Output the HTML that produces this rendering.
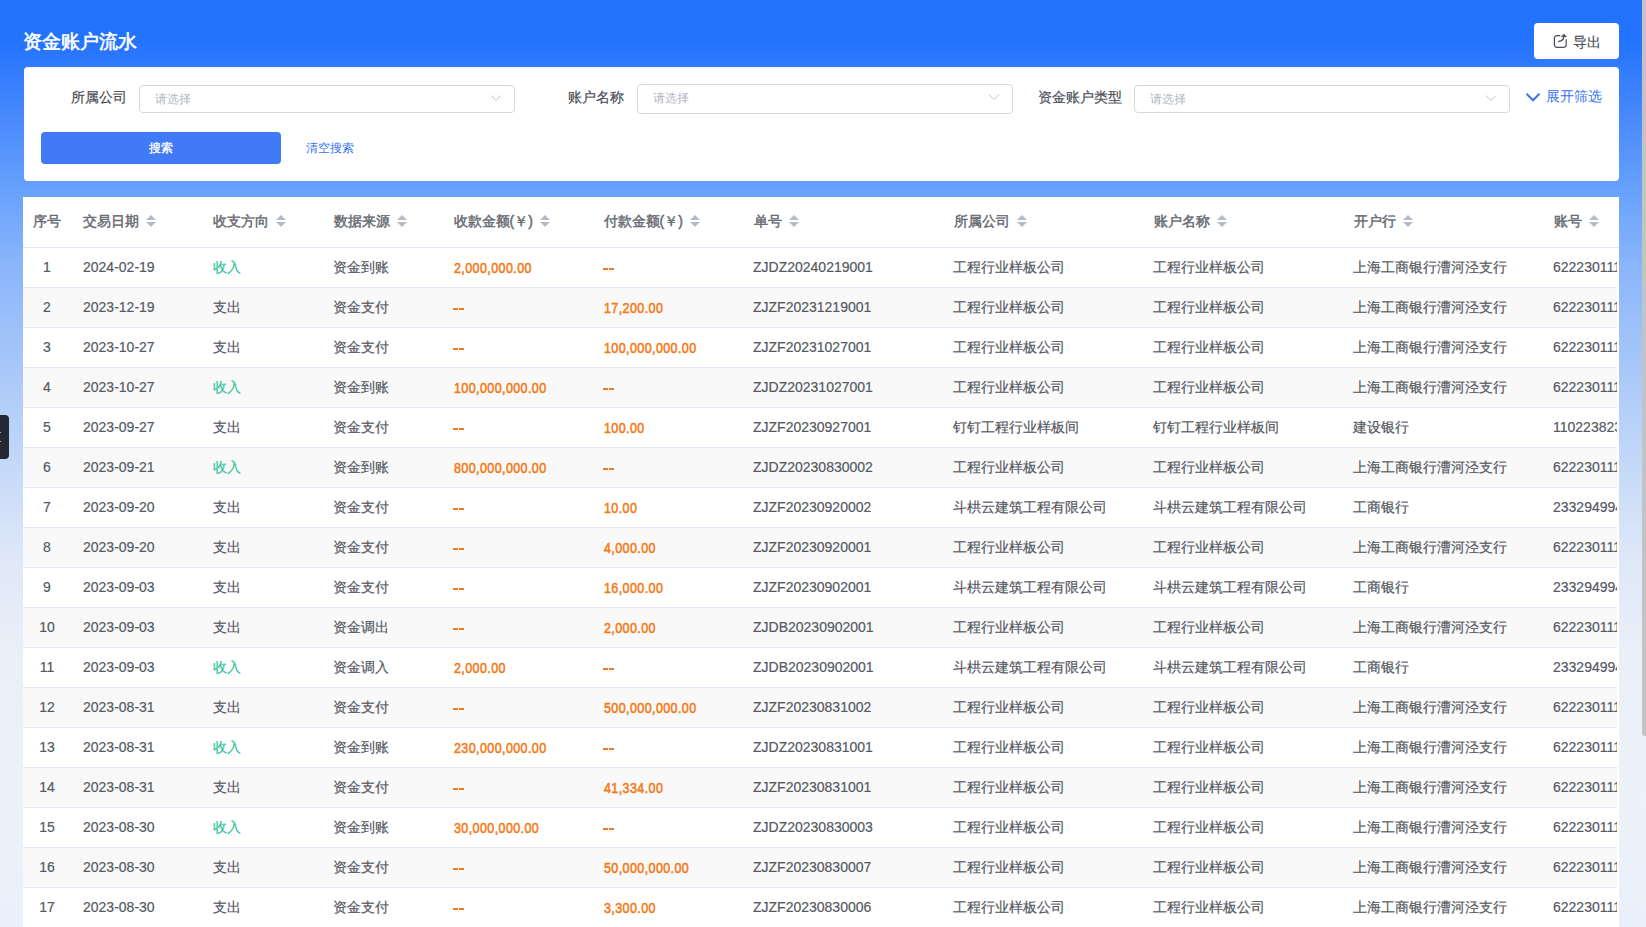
<!DOCTYPE html><html><head><meta charset="utf-8"><style>*{margin:0;padding:0;box-sizing:border-box}
html,body{width:1646px;height:927px;overflow:hidden}
body{font-family:"Liberation Sans",sans-serif;position:relative;color:#4b4e55}
.bg{position:absolute;left:0;top:0;width:1646px;height:927px;background:linear-gradient(180deg,#2272fe 0px,#2373fe 40px,#4a8afc 120px,#65a0fc 185px,#8ab5fa 265px,#c3d8f8 460px,#dfe8f8 560px,#ebf0f8 660px,#edf2f9 800px,#e9f0fb 927px)}
.title{position:absolute;left:23.4px;top:28.6px;font-size:19px;line-height:26px;font-weight:400;color:#fff;-webkit-text-stroke:0.6px #fff;letter-spacing:0px}
.export{position:absolute;left:1534px;top:23px;width:85px;height:36px;background:#fff;border-radius:4px;font-size:14px;line-height:36px;color:#4b4e55}
.export .ei{position:absolute;left:19px;top:10px}
.export span{position:absolute;left:39px;top:0.8px;-webkit-text-stroke:0.2px #4b4e55}
.filter{position:absolute;left:24px;top:67px;width:1595px;height:114px;background:#fff;border-radius:4px}
.lbl{position:absolute;top:19.4px;font-size:14px;line-height:22px;color:#4b4e55;-webkit-text-stroke:0.2px #4b4e55}
.inp{position:absolute;top:18px;width:376px;height:28px;border:1px solid #d5d8e1;border-radius:4px}
.inp span{position:absolute;left:15px;top:-0.5px;line-height:26px;font-size:12px;color:#b3b6be}
.inp .chev{position:absolute;right:12.1px;top:7.6px}
.expand{position:absolute;left:1501px;top:18px;height:22px;color:#3a75f0;font-size:14px;line-height:22px}
.expand svg{position:absolute;left:0;top:7px}
.expand span{position:absolute;left:21px;top:0;white-space:nowrap}
.btn{position:absolute;left:17px;top:65px;width:240px;height:32px;border-radius:4px;background:#417af5;color:#fff;font-size:12px;line-height:32px;text-align:center;-webkit-text-stroke:0.3px #fff}
.clear{position:absolute;left:282px;top:65px;line-height:32px;font-size:12px;color:#3a75f0}
.tcard{position:absolute;left:23px;top:197px;width:1596px;height:740px;background:#fff}
.tview{position:absolute;left:0;top:0;width:1594px;height:740px;overflow:hidden}
.th{position:absolute;top:-1.2px;height:50px;line-height:50px;font-size:14px;font-weight:400;color:#686b72;-webkit-text-stroke:0.45px #686b72;white-space:nowrap}
.th .s{display:inline-block;position:relative;width:10px;height:12px;margin-left:7px;vertical-align:middle;top:-1.3px}
.th .s b{position:absolute;left:0;width:0;height:0;border-left:5px solid transparent;border-right:5px solid transparent}
.th .s .u{top:0;border-bottom:5px solid #b5bac5}
.th .s .d{top:7px;border-top:5px solid #b5bac5}
.hline{position:absolute;left:0;top:50px;width:1596px;height:1px;background:#e4e8f3}
.row{position:absolute;left:0;width:1594px;height:40px;background:#fff;border-bottom:1px solid #e4e8f3}
.row.even{background:#f9f9fa}
.td{position:absolute;top:-1.2px;height:40px;line-height:40px;font-size:14px;color:#56595f;white-space:nowrap;-webkit-text-stroke:0.2px #56595f}
.td.c0{left:0;width:48px;text-align:center}
.td.green{color:#30c29b;-webkit-text-stroke-color:#30c29b}
.td.amt{color:#f47a17;font-size:14.2px;-webkit-text-stroke:0.55px #f47a17;top:0.4px}
.td.amt .n{display:inline-block;transform:scaleX(.88);transform-origin:0 50%;letter-spacing:.47px;margin-left:.5px}
.dash{position:absolute;top:20px;width:5px;height:2px;background:#f47a17}
.tab{position:absolute;left:0;top:415px;width:9px;height:44px;background:#232833;border-radius:0 4px 4px 0}
.tab i{position:absolute;left:0;width:1px;height:1px;background:#aaa}
.tab i:nth-child(1){top:17px}.tab i:nth-child(2){top:26px}
.thumb{position:absolute;left:1642px;top:0;width:4px;height:736px;background:#c3c3c3;border-radius:0 0 0 3px}
</style></head><body>
<div class="bg"></div>
<div class="title">资金账户流水</div>
<div class="export"><svg class="ei" width="16" height="16" viewBox="0 0 16 16"><path d="M6.9 2.6H4a2.6 2.6 0 0 0-2.6 2.6v6.5a2.6 2.6 0 0 0 2.6 2.6h6.6a2.6 2.6 0 0 0 2.6-2.6V6.6" fill="none" stroke="#4b4e55" stroke-width="1.25" stroke-linecap="round"/><path d="M5.6 8.3C8.6 8.1 10.7 6.6 10.9 3.4" fill="none" stroke="#4b4e55" stroke-width="1.25" stroke-linecap="round"/><path d="M10.9 0.9L13.7 3.7H8.1z" fill="#4b4e55" stroke="#4b4e55" stroke-width="0.4" stroke-linejoin="round"/></svg><span>导出</span></div>
<div class="filter">
<div class="lbl" style="left:46.5px;">所属公司</div>
<div class="inp" style="left:115px"><span>请选择</span><svg class="chev" width="12" height="8" viewBox="0 0 12 8"><path d="M1 1.5l5 5 5-5" fill="none" stroke="#bfc2ca" stroke-width="1"/></svg></div>
<div class="lbl" style="left:544px;">账户名称</div>
<div class="inp" style="left:613px;top:17.4px;height:29.2px"><span>请选择</span><svg class="chev" width="12" height="8" viewBox="0 0 12 8"><path d="M1 1.5l5 5 5-5" fill="none" stroke="#bfc2ca" stroke-width="1"/></svg></div>
<div class="lbl" style="left:1014.3px;">资金账户类型</div>
<div class="inp" style="left:1110px"><span>请选择</span><svg class="chev" width="12" height="8" viewBox="0 0 12 8"><path d="M1 1.5l5 5 5-5" fill="none" stroke="#bfc2ca" stroke-width="1"/></svg></div>
<div class="expand"><svg width="16" height="10" viewBox="0 0 16 10"><path d="M1.5 1.8l6.5 6.5 6.5-6.5" fill="none" stroke="#3a75f0" stroke-width="2"/></svg><span>展开筛选</span></div>
<div class="btn">搜索</div><div class="clear">清空搜索</div>
</div>
<div class="tcard"><div class="tview">
<div class="th" style="left:0;width:48px;text-align:center">序号</div>
<div class="th" style="left:60px">交易日期<i class="s"><b class="u"></b><b class="d"></b></i></div>
<div class="th" style="left:190px">收支方向<i class="s"><b class="u"></b><b class="d"></b></i></div>
<div class="th" style="left:310.6px">数据来源<i class="s"><b class="u"></b><b class="d"></b></i></div>
<div class="th" style="left:430.6px">收款金额(￥)<i class="s"><b class="u"></b><b class="d"></b></i></div>
<div class="th" style="left:580.6px">付款金额(￥)<i class="s"><b class="u"></b><b class="d"></b></i></div>
<div class="th" style="left:730.6px">单号<i class="s"><b class="u"></b><b class="d"></b></i></div>
<div class="th" style="left:930.6px">所属公司<i class="s"><b class="u"></b><b class="d"></b></i></div>
<div class="th" style="left:1130.6px">账户名称<i class="s"><b class="u"></b><b class="d"></b></i></div>
<div class="th" style="left:1330.6px">开户行<i class="s"><b class="u"></b><b class="d"></b></i></div>
<div class="th" style="left:1530.6px">账号<i class="s"><b class="u"></b><b class="d"></b></i></div>
<div class="row" style="top:51px">
<div class="td c0">1</div>
<div class="td" style="left:60px">2024-02-19</div>
<div class="td green" style="left:190px">收入</div>
<div class="td" style="left:310px">资金到账</div>
<div class="td amt" style="left:430px"><span class="n">2,000,000.00</span></div>
<div class="td amt" style="left:580px"><i class="dash" style="left:0"></i><i class="dash" style="left:6px"></i></div>
<div class="td" style="left:730px">ZJDZ20240219001</div>
<div class="td" style="left:930px">工程行业样板公司</div>
<div class="td" style="left:1130px">工程行业样板公司</div>
<div class="td" style="left:1330px">上海工商银行漕河泾支行</div>
<div class="td" style="left:1530px">6222301111</div>
</div>
<div class="row even" style="top:91px">
<div class="td c0">2</div>
<div class="td" style="left:60px">2023-12-19</div>
<div class="td" style="left:190px">支出</div>
<div class="td" style="left:310px">资金支付</div>
<div class="td amt" style="left:430px"><i class="dash" style="left:0"></i><i class="dash" style="left:6px"></i></div>
<div class="td amt" style="left:580px"><span class="n">17,200.00</span></div>
<div class="td" style="left:730px">ZJZF20231219001</div>
<div class="td" style="left:930px">工程行业样板公司</div>
<div class="td" style="left:1130px">工程行业样板公司</div>
<div class="td" style="left:1330px">上海工商银行漕河泾支行</div>
<div class="td" style="left:1530px">6222301111</div>
</div>
<div class="row" style="top:131px">
<div class="td c0">3</div>
<div class="td" style="left:60px">2023-10-27</div>
<div class="td" style="left:190px">支出</div>
<div class="td" style="left:310px">资金支付</div>
<div class="td amt" style="left:430px"><i class="dash" style="left:0"></i><i class="dash" style="left:6px"></i></div>
<div class="td amt" style="left:580px"><span class="n">100,000,000.00</span></div>
<div class="td" style="left:730px">ZJZF20231027001</div>
<div class="td" style="left:930px">工程行业样板公司</div>
<div class="td" style="left:1130px">工程行业样板公司</div>
<div class="td" style="left:1330px">上海工商银行漕河泾支行</div>
<div class="td" style="left:1530px">6222301111</div>
</div>
<div class="row even" style="top:171px">
<div class="td c0">4</div>
<div class="td" style="left:60px">2023-10-27</div>
<div class="td green" style="left:190px">收入</div>
<div class="td" style="left:310px">资金到账</div>
<div class="td amt" style="left:430px"><span class="n">100,000,000.00</span></div>
<div class="td amt" style="left:580px"><i class="dash" style="left:0"></i><i class="dash" style="left:6px"></i></div>
<div class="td" style="left:730px">ZJDZ20231027001</div>
<div class="td" style="left:930px">工程行业样板公司</div>
<div class="td" style="left:1130px">工程行业样板公司</div>
<div class="td" style="left:1330px">上海工商银行漕河泾支行</div>
<div class="td" style="left:1530px">6222301111</div>
</div>
<div class="row" style="top:211px">
<div class="td c0">5</div>
<div class="td" style="left:60px">2023-09-27</div>
<div class="td" style="left:190px">支出</div>
<div class="td" style="left:310px">资金支付</div>
<div class="td amt" style="left:430px"><i class="dash" style="left:0"></i><i class="dash" style="left:6px"></i></div>
<div class="td amt" style="left:580px"><span class="n">100.00</span></div>
<div class="td" style="left:730px">ZJZF20230927001</div>
<div class="td" style="left:930px">钉钉工程行业样板间</div>
<div class="td" style="left:1130px">钉钉工程行业样板间</div>
<div class="td" style="left:1330px">建设银行</div>
<div class="td" style="left:1530px">1102238233</div>
</div>
<div class="row even" style="top:251px">
<div class="td c0">6</div>
<div class="td" style="left:60px">2023-09-21</div>
<div class="td green" style="left:190px">收入</div>
<div class="td" style="left:310px">资金到账</div>
<div class="td amt" style="left:430px"><span class="n">800,000,000.00</span></div>
<div class="td amt" style="left:580px"><i class="dash" style="left:0"></i><i class="dash" style="left:6px"></i></div>
<div class="td" style="left:730px">ZJDZ20230830002</div>
<div class="td" style="left:930px">工程行业样板公司</div>
<div class="td" style="left:1130px">工程行业样板公司</div>
<div class="td" style="left:1330px">上海工商银行漕河泾支行</div>
<div class="td" style="left:1530px">6222301111</div>
</div>
<div class="row" style="top:291px">
<div class="td c0">7</div>
<div class="td" style="left:60px">2023-09-20</div>
<div class="td" style="left:190px">支出</div>
<div class="td" style="left:310px">资金支付</div>
<div class="td amt" style="left:430px"><i class="dash" style="left:0"></i><i class="dash" style="left:6px"></i></div>
<div class="td amt" style="left:580px"><span class="n">10.00</span></div>
<div class="td" style="left:730px">ZJZF20230920002</div>
<div class="td" style="left:930px">斗栱云建筑工程有限公司</div>
<div class="td" style="left:1130px">斗栱云建筑工程有限公司</div>
<div class="td" style="left:1330px">工商银行</div>
<div class="td" style="left:1530px">2332949944</div>
</div>
<div class="row even" style="top:331px">
<div class="td c0">8</div>
<div class="td" style="left:60px">2023-09-20</div>
<div class="td" style="left:190px">支出</div>
<div class="td" style="left:310px">资金支付</div>
<div class="td amt" style="left:430px"><i class="dash" style="left:0"></i><i class="dash" style="left:6px"></i></div>
<div class="td amt" style="left:580px"><span class="n">4,000.00</span></div>
<div class="td" style="left:730px">ZJZF20230920001</div>
<div class="td" style="left:930px">工程行业样板公司</div>
<div class="td" style="left:1130px">工程行业样板公司</div>
<div class="td" style="left:1330px">上海工商银行漕河泾支行</div>
<div class="td" style="left:1530px">6222301111</div>
</div>
<div class="row" style="top:371px">
<div class="td c0">9</div>
<div class="td" style="left:60px">2023-09-03</div>
<div class="td" style="left:190px">支出</div>
<div class="td" style="left:310px">资金支付</div>
<div class="td amt" style="left:430px"><i class="dash" style="left:0"></i><i class="dash" style="left:6px"></i></div>
<div class="td amt" style="left:580px"><span class="n">16,000.00</span></div>
<div class="td" style="left:730px">ZJZF20230902001</div>
<div class="td" style="left:930px">斗栱云建筑工程有限公司</div>
<div class="td" style="left:1130px">斗栱云建筑工程有限公司</div>
<div class="td" style="left:1330px">工商银行</div>
<div class="td" style="left:1530px">2332949944</div>
</div>
<div class="row even" style="top:411px">
<div class="td c0">10</div>
<div class="td" style="left:60px">2023-09-03</div>
<div class="td" style="left:190px">支出</div>
<div class="td" style="left:310px">资金调出</div>
<div class="td amt" style="left:430px"><i class="dash" style="left:0"></i><i class="dash" style="left:6px"></i></div>
<div class="td amt" style="left:580px"><span class="n">2,000.00</span></div>
<div class="td" style="left:730px">ZJDB20230902001</div>
<div class="td" style="left:930px">工程行业样板公司</div>
<div class="td" style="left:1130px">工程行业样板公司</div>
<div class="td" style="left:1330px">上海工商银行漕河泾支行</div>
<div class="td" style="left:1530px">6222301111</div>
</div>
<div class="row" style="top:451px">
<div class="td c0">11</div>
<div class="td" style="left:60px">2023-09-03</div>
<div class="td green" style="left:190px">收入</div>
<div class="td" style="left:310px">资金调入</div>
<div class="td amt" style="left:430px"><span class="n">2,000.00</span></div>
<div class="td amt" style="left:580px"><i class="dash" style="left:0"></i><i class="dash" style="left:6px"></i></div>
<div class="td" style="left:730px">ZJDB20230902001</div>
<div class="td" style="left:930px">斗栱云建筑工程有限公司</div>
<div class="td" style="left:1130px">斗栱云建筑工程有限公司</div>
<div class="td" style="left:1330px">工商银行</div>
<div class="td" style="left:1530px">2332949944</div>
</div>
<div class="row even" style="top:491px">
<div class="td c0">12</div>
<div class="td" style="left:60px">2023-08-31</div>
<div class="td" style="left:190px">支出</div>
<div class="td" style="left:310px">资金支付</div>
<div class="td amt" style="left:430px"><i class="dash" style="left:0"></i><i class="dash" style="left:6px"></i></div>
<div class="td amt" style="left:580px"><span class="n">500,000,000.00</span></div>
<div class="td" style="left:730px">ZJZF20230831002</div>
<div class="td" style="left:930px">工程行业样板公司</div>
<div class="td" style="left:1130px">工程行业样板公司</div>
<div class="td" style="left:1330px">上海工商银行漕河泾支行</div>
<div class="td" style="left:1530px">6222301111</div>
</div>
<div class="row" style="top:531px">
<div class="td c0">13</div>
<div class="td" style="left:60px">2023-08-31</div>
<div class="td green" style="left:190px">收入</div>
<div class="td" style="left:310px">资金到账</div>
<div class="td amt" style="left:430px"><span class="n">230,000,000.00</span></div>
<div class="td amt" style="left:580px"><i class="dash" style="left:0"></i><i class="dash" style="left:6px"></i></div>
<div class="td" style="left:730px">ZJDZ20230831001</div>
<div class="td" style="left:930px">工程行业样板公司</div>
<div class="td" style="left:1130px">工程行业样板公司</div>
<div class="td" style="left:1330px">上海工商银行漕河泾支行</div>
<div class="td" style="left:1530px">6222301111</div>
</div>
<div class="row even" style="top:571px">
<div class="td c0">14</div>
<div class="td" style="left:60px">2023-08-31</div>
<div class="td" style="left:190px">支出</div>
<div class="td" style="left:310px">资金支付</div>
<div class="td amt" style="left:430px"><i class="dash" style="left:0"></i><i class="dash" style="left:6px"></i></div>
<div class="td amt" style="left:580px"><span class="n">41,334.00</span></div>
<div class="td" style="left:730px">ZJZF20230831001</div>
<div class="td" style="left:930px">工程行业样板公司</div>
<div class="td" style="left:1130px">工程行业样板公司</div>
<div class="td" style="left:1330px">上海工商银行漕河泾支行</div>
<div class="td" style="left:1530px">6222301111</div>
</div>
<div class="row" style="top:611px">
<div class="td c0">15</div>
<div class="td" style="left:60px">2023-08-30</div>
<div class="td green" style="left:190px">收入</div>
<div class="td" style="left:310px">资金到账</div>
<div class="td amt" style="left:430px"><span class="n">30,000,000.00</span></div>
<div class="td amt" style="left:580px"><i class="dash" style="left:0"></i><i class="dash" style="left:6px"></i></div>
<div class="td" style="left:730px">ZJDZ20230830003</div>
<div class="td" style="left:930px">工程行业样板公司</div>
<div class="td" style="left:1130px">工程行业样板公司</div>
<div class="td" style="left:1330px">上海工商银行漕河泾支行</div>
<div class="td" style="left:1530px">6222301111</div>
</div>
<div class="row even" style="top:651px">
<div class="td c0">16</div>
<div class="td" style="left:60px">2023-08-30</div>
<div class="td" style="left:190px">支出</div>
<div class="td" style="left:310px">资金支付</div>
<div class="td amt" style="left:430px"><i class="dash" style="left:0"></i><i class="dash" style="left:6px"></i></div>
<div class="td amt" style="left:580px"><span class="n">50,000,000.00</span></div>
<div class="td" style="left:730px">ZJZF20230830007</div>
<div class="td" style="left:930px">工程行业样板公司</div>
<div class="td" style="left:1130px">工程行业样板公司</div>
<div class="td" style="left:1330px">上海工商银行漕河泾支行</div>
<div class="td" style="left:1530px">6222301111</div>
</div>
<div class="row" style="top:691px">
<div class="td c0">17</div>
<div class="td" style="left:60px">2023-08-30</div>
<div class="td" style="left:190px">支出</div>
<div class="td" style="left:310px">资金支付</div>
<div class="td amt" style="left:430px"><i class="dash" style="left:0"></i><i class="dash" style="left:6px"></i></div>
<div class="td amt" style="left:580px"><span class="n">3,300.00</span></div>
<div class="td" style="left:730px">ZJZF20230830006</div>
<div class="td" style="left:930px">工程行业样板公司</div>
<div class="td" style="left:1130px">工程行业样板公司</div>
<div class="td" style="left:1330px">上海工商银行漕河泾支行</div>
<div class="td" style="left:1530px">6222301111</div>
</div>
</div><div class="hline"></div></div>
<div class="tab"><i></i><i></i></div>
<div class="thumb"></div>
</body></html>
